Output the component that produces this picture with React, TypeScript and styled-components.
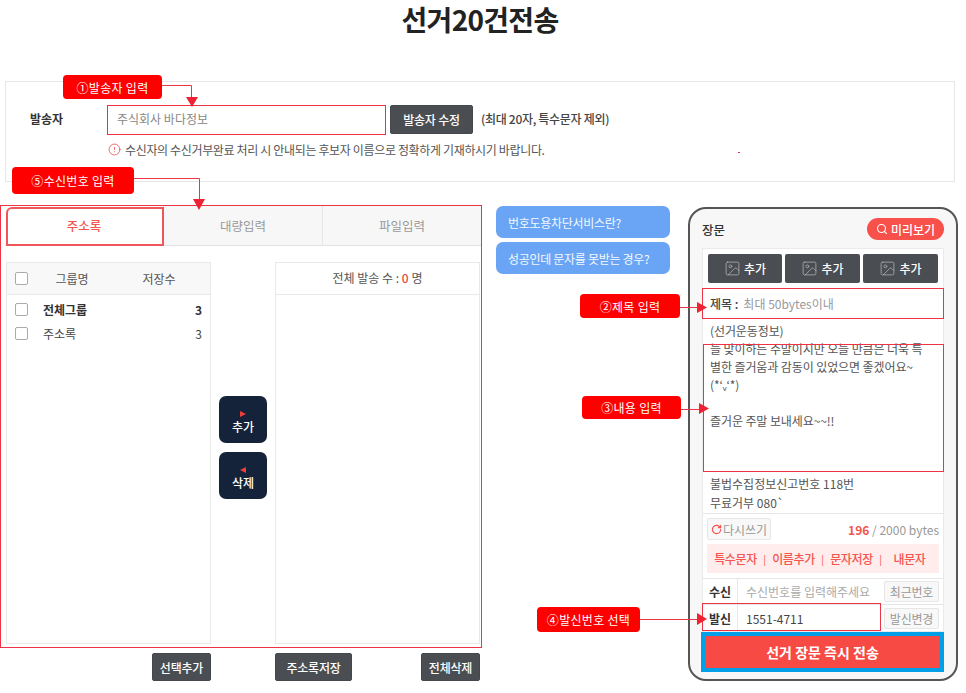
import * as React from "react";
import styled, { createGlobalStyle } from "styled-components";
import { CircleAlert, RotateCw, Image as ImageIcon, Search } from "lucide-react";

const GlobalStyle = createGlobalStyle`
  html, body {
    margin: 0;
    padding: 0;
    background: #fff;
    font-family: "Noto Sans CJK KR", "Noto Sans", sans-serif;
    font-size: 12px;
    color: #444;
  }
  * {
    box-sizing: border-box;
  }
`;

const Page = styled.div`
  position: relative;
  width: 966px;
  height: 693px;
  overflow: hidden;
`;

const Title = styled.h1`
  margin: 0;
  height: 81px;
  padding-right: 6px;
  text-align: center;
  font-size: 28px;
  line-height: 38px;
  font-weight: 700;
  letter-spacing: -0.7px;
  color: #222;
`;

const SenderCard = styled.section`
  margin-left: 5px;
  width: 950px;
  height: 101px;
  border: 1px solid #e6e6e6;
  padding: 23px 0 0 24px;
`;

const SenderRow = styled.div`
  display: flex;
  align-items: flex-start;
  height: 30px;
`;

const SenderLabel = styled.span`
  width: 77px;
  line-height: 28px;
  font-size: 12px;
  font-weight: 700;
  letter-spacing: -0.1px;
  color: #333;
`;

const SenderInput = styled.div`
  width: 279px;
  height: 30px;
  padding-left: 9px;
  border: 1px solid #ddd;
  line-height: 26px;
  font-size: 12px;
  color: #888;
`;

const DarkButton = styled.button<{ $w: number }>`
  width: ${(p) => p.$w}px;
  height: 28px;
  padding: 0;
  border: 1px solid #44484d;
  border-radius: 2px;
  background: #4a4e53;
  color: #fff;
  font-family: inherit;
  font-size: 12px;
  font-weight: 500;
  letter-spacing: -0.2px;
`;

const SenderButton = styled(DarkButton)`
  height: 29px;
`;

const SenderHint = styled.span`
  margin-left: 8px;
  line-height: 27px;
  font-size: 12px;
  font-weight: 500;
  letter-spacing: -0.3px;
  color: #444;
`;

const Notice = styled.div`
  display: flex;
  align-items: center;
  gap: 4px;
  margin: 4px 0 0 78px;
  height: 20px;
  font-size: 12px;
  letter-spacing: -0.35px;
  color: #555;
  svg {
    color: #ee5555;
  }
`;

const Workspace = styled.div`
  display: flex;
  align-items: flex-start;
  margin: 24px 0 0 5px;
`;

const LeftColumn = styled.div`
  width: 476px;
  flex: none;
`;

const Tabs = styled.div`
  display: grid;
  grid-template-columns: 158px 159px 159px;
  height: 40px;
  border-bottom: 1px solid #e3e3e3;
`;

const Tab = styled.div<{ $active?: boolean }>`
  display: flex;
  align-items: center;
  justify-content: center;
  font-size: 12.5px;
  font-weight: ${(p) => (p.$active ? 500 : 400)};
  color: ${(p) => (p.$active ? "#f4554f" : "#999")};
  background: ${(p) => (p.$active ? "#fff" : "#f7f7f7")};
  border-left: ${(p) => (p.$active ? "none" : "1px solid #e6e6e6")};
`;

const Lists = styled.div`
  display: grid;
  grid-template-columns: 205px 64px 205px;
  margin-top: 16px;
  padding-left: 1px;
  height: 382px;
`;

const ListBox = styled.div`
  border: 1px solid #e9e9e9;
`;

const ListHead = styled.div`
  display: flex;
  align-items: center;
  height: 32px;
  padding-left: 8px;
  border-bottom: 1px solid #e9e9e9;
  background: #f8f8f8;
  color: #555;
`;

const ReceiverHead = styled.div`
  height: 32px;
  line-height: 30px;
  border-bottom: 1px solid #e9e9e9;
  text-align: center;
  color: #555;
`;

const Zero = styled.b`
  color: #e8453f;
  font-weight: 500;
`;

const Check = styled.span`
  display: block;
  width: 13px;
  height: 13px;
  border: 1px solid #aaa;
  border-radius: 2px;
  background: #fff;
  flex: none;
`;

const HeadName = styled.span`
  width: 88px;
  text-align: center;
`;

const HeadCount = styled.span`
  width: 86px;
  text-align: center;
`;

const GroupList = styled.div`
  padding-top: 2px;
`;

const GroupRow = styled.div<{ $bold?: boolean }>`
  display: flex;
  align-items: center;
  height: 24px;
  padding: 0 8px 0 8px;
  font-weight: ${(p) => (p.$bold ? 700 : 400)};
  color: ${(p) => (p.$bold ? "#333" : "#444")};
`;

const GroupName = styled.span`
  margin-left: 15px;
  flex: 1;
`;

const Movers = styled.div`
  display: flex;
  flex-direction: column;
  align-items: center;
  gap: 9px;
  padding-top: 134px;
`;

const MoverButton = styled.button`
  display: flex;
  flex-direction: column;
  align-items: center;
  justify-content: center;
  width: 48px;
  height: 47px;
  padding: 5px 0 0;
  border: none;
  border-radius: 7px;
  background: #15233a;
  color: #fff;
  font-family: inherit;
  font-size: 12px;
  font-weight: 500;
  line-height: 15px;
`;

const Tri = styled.i<{ $left?: boolean }>`
  display: block;
  width: 0;
  height: 0;
  margin-bottom: 2px;
  border-top: 3.5px solid transparent;
  border-bottom: 3.5px solid transparent;
  ${(p) =>
    p.$left ? "border-right: 6px solid #ee3b3b;" : "border-left: 6px solid #ee3b3b;"}
`;

const ListActions = styled.div`
  display: flex;
  margin-top: 9px;
  padding-left: 147px;
`;

const Spacer = styled.span<{ $w: number }>`
  width: ${(p) => p.$w}px;
  flex: none;
`;

const HelpColumn = styled.div`
  display: flex;
  flex-direction: column;
  gap: 4px;
  width: 174px;
  margin-left: 15px;
  flex: none;
`;

const HelpButton = styled.button`
  height: 32px;
  padding: 0 0 0 12px;
  border: none;
  border-radius: 7px;
  background: #6aa5f5;
  color: #f4f8ff;
  font-family: inherit;
  font-size: 12px;
  letter-spacing: -0.3px;
  text-align: left;
`;

const Phone = styled.div`
  width: 270px;
  height: 474px;
  margin: 1px 0 0 18px;
  flex: none;
  padding: 9px 12px 0 12px;
  border: 2px solid #555;
  border-radius: 18px;
  background: #f7f7f7;
`;

const PhoneHead = styled.div`
  display: flex;
  align-items: center;
  justify-content: space-between;
  height: 22px;
  margin-bottom: 8px;
  font-size: 12.5px;
  font-weight: 500;
  color: #333;
`;

const PreviewButton = styled.button`
  display: flex;
  align-items: center;
  justify-content: center;
  gap: 3px;
  width: 77px;
  height: 22px;
  padding: 0;
  border: none;
  border-radius: 11px;
  background: #f8504a;
  color: #fff;
  font-family: inherit;
  font-size: 12px;
  font-weight: 500;
`;

const Sheet = styled.div`
  width: 242px;
  height: 384px;
  border: 1px solid #eaeaea;
  background: #fff;
`;

const ImageRow = styled.div`
  display: grid;
  grid-template-columns: 74px 75px 75px;
  gap: 3px;
  padding: 5px 5px 0;
`;

const ImageButton = styled.button`
  display: flex;
  align-items: center;
  justify-content: center;
  gap: 3px;
  height: 29px;
  padding: 0;
  border: none;
  border-radius: 2px;
  background: #4a4e53;
  color: #fff;
  font-family: inherit;
  font-size: 12px;
  font-weight: 500;
  svg {
    color: #aaa;
  }
`;

const SubjectRow = styled.div`
  display: flex;
  align-items: center;
  gap: 5px;
  height: 31px;
  margin-top: 5px;
  padding-left: 7px;
  color: #999;
`;

const SubjectLabel = styled.span`
  font-weight: 500;
  color: #444;
`;

const Message = styled.div`
  height: 155px;
  padding: 3px 7px 0;
  line-height: 18px;
  font-size: 12px;
  color: #555;
  white-space: pre-wrap;
  letter-spacing: -0.1px;
`;

const Footer = styled.div`
  padding: 0 7px;
  line-height: 19px;
  height: 40px;
  color: #555;
  border-bottom: 1px solid #e6e6e6;
  white-space: pre-wrap;
`;

const CountRow = styled.div`
  display: flex;
  align-items: center;
  justify-content: space-between;
  height: 30px;
  padding: 0 4px 0 4px;
`;

const ResetButton = styled.button`
  display: flex;
  align-items: center;
  justify-content: center;
  gap: 1px;
  width: 64px;
  height: 22px;
  padding: 0;
  border: 1px solid #e6e6e6;
  border-radius: 2px;
  background: #f8f8f8;
  color: #999;
  font-family: inherit;
  font-size: 12px;
  svg {
    color: #f4554f;
  }
`;

const Bytes = styled.span`
  color: #999;
`;

const ByteCount = styled.b`
  color: #f4554f;
  font-weight: 700;
`;

const ToolRow = styled.div`
  display: flex;
  align-items: center;
  height: 29px;
  margin: 0 4px 0 4px;
  padding-left: 7px;
  background: #ffecec;
  color: #f4554f;
  font-weight: 500;
  white-space: nowrap;
  letter-spacing: -0.4px;
`;

const ToolLink = styled.span<{ $w: number }>`
  width: ${(p) => p.$w}px;
  flex: none;
  text-align: center;
`;

const ToolSep = styled.span`
  width: 15px;
  flex: none;
  text-align: center;
  font-size: 10px;
  font-weight: 400;
`;

const FieldRow = styled.div<{ $h: number; $top?: boolean }>`
  display: flex;
  align-items: center;
  height: ${(p) => p.$h}px;
  margin-top: ${(p) => (p.$top ? "5px" : "0")};
  border-top: 1px solid #e6e6e6;
`;

const FieldLabel = styled.span`
  width: 35px;
  height: 100%;
  display: flex;
  align-items: center;
  justify-content: center;
  border-right: 1px solid #e6e6e6;
  font-weight: 700;
  color: #333;
`;

const FieldValue = styled.span<{ $muted?: boolean }>`
  flex: 1;
  padding-left: 8px;
  color: ${(p) => (p.$muted ? "#aaa" : "#444")};
`;

const FieldButton = styled.button`
  width: 55px;
  height: 21px;
  margin-right: 4px;
  padding: 0;
  border: 1px solid #e6e6e6;
  border-radius: 2px;
  background: #f8f8f8;
  color: #999;
  font-family: inherit;
  font-size: 12px;
  letter-spacing: -0.2px;
`;

const SendButton = styled.button`
  display: block;
  width: 243px;
  height: 40px;
  margin-left: -2px;
  padding: 0;
  border: 4px solid #00a0e9;
  background: #f84a45;
  color: #fff;
  font-family: inherit;
  font-size: 14px;
  font-weight: 700;
`;

const Callout = styled.div<{ $x: number; $y: number; $w: number; $h: number }>`
  position: absolute;
  left: ${(p) => p.$x}px;
  top: ${(p) => p.$y}px;
  width: ${(p) => p.$w}px;
  height: ${(p) => p.$h}px;
  display: flex;
  align-items: center;
  justify-content: center;
  border-radius: 4px;
  background: #fe0000;
  color: #fff;
  font-size: 12px;
  letter-spacing: 0.3px;
`;

const Outline = styled.div<{ $x: number; $y: number; $w: number; $h: number }>`
  position: absolute;
  left: ${(p) => p.$x}px;
  top: ${(p) => p.$y}px;
  width: ${(p) => p.$w}px;
  height: ${(p) => p.$h}px;
  border: 1px solid #ee3344;
  pointer-events: none;
`;

const ActiveTabOutline = styled(Outline)`
  border: 2px solid #f0555a;
  border-top-left-radius: 6px;
`;

const Arrows = styled.svg`
  position: absolute;
  left: 0;
  top: 0;
  pointer-events: none;
`;

const Dot = styled.span`
  position: absolute;
  left: 738px;
  top: 152px;
  width: 2px;
  height: 1px;
  background: #e0304a;
`;

export default function App() {
  return (
    <Page>
      <GlobalStyle />
      <Title>선거20건전송</Title>

      <SenderCard>
        <SenderRow>
          <SenderLabel>발송자</SenderLabel>
          <SenderInput>주식회사 바다정보</SenderInput>
          <Spacer $w={4} />
          <SenderButton $w={83}>발송자 수정</SenderButton>
          <SenderHint>(최대 20자, 특수문자 제외)</SenderHint>
        </SenderRow>
        <Notice>
          <CircleAlert size={13} strokeWidth={1.6} />
          수신자의 수신거부완료 처리 시 안내되는 후보자 이름으로 정확하게 기재하시기 바랍니다.
        </Notice>
      </SenderCard>

      <Workspace>
        <LeftColumn>
          <Tabs>
            <Tab $active>주소록</Tab>
            <Tab>대량입력</Tab>
            <Tab>파일입력</Tab>
          </Tabs>
          <Lists>
            <ListBox>
              <ListHead>
                <Check />
                <HeadName>그룹명</HeadName>
                <HeadCount>저장수</HeadCount>
              </ListHead>
              <GroupList>
                <GroupRow $bold>
                  <Check />
                  <GroupName>전체그룹</GroupName>3
                </GroupRow>
                <GroupRow>
                  <Check />
                  <GroupName>주소록</GroupName>3
                </GroupRow>
              </GroupList>
            </ListBox>
            <Movers>
              <MoverButton>
                <Tri />
                추가
              </MoverButton>
              <MoverButton>
                <Tri $left />
                삭제
              </MoverButton>
            </Movers>
            <ListBox>
              <ReceiverHead>
                전체 발송 수 : <Zero>0</Zero> 명
              </ReceiverHead>
            </ListBox>
          </Lists>
          <ListActions>
            <DarkButton $w={59}>선택추가</DarkButton>
            <Spacer $w={64} />
            <DarkButton $w={77}>주소록저장</DarkButton>
            <Spacer $w={69} />
            <DarkButton $w={59}>전체삭제</DarkButton>
          </ListActions>
        </LeftColumn>

        <HelpColumn>
          <HelpButton>번호도용차단서비스란?</HelpButton>
          <HelpButton>성공인데 문자를 못받는 경우?</HelpButton>
        </HelpColumn>

        <Phone>
          <PhoneHead>
            장문
            <PreviewButton>
              <Search size={12} strokeWidth={2.2} />
              미리보기
            </PreviewButton>
          </PhoneHead>
          <Sheet>
            <ImageRow>
              {[0, 1, 2].map((i) => (
                <ImageButton key={i}>
                  <ImageIcon size={17} strokeWidth={1.2} />
                  추가
                </ImageButton>
              ))}
            </ImageRow>
            <SubjectRow>
              <SubjectLabel>제목 :</SubjectLabel>
              최대 50bytes이내
            </SubjectRow>
            <Message>
              {"(선거운동정보)\n늘 맞이하는 주말이지만 오늘 만큼은 더욱 특\n별한 즐거움과 감동이 있었으면 좋겠어요~\n(*ʻᵥʻ*)\n\n즐거운 주말 보내세요~~!!"}
            </Message>
            <Footer>{"불법수집정보신고번호 118번\n무료거부 080`"}</Footer>
            <CountRow>
              <ResetButton>
                <RotateCw size={11} strokeWidth={2.6} />
                다시쓰기
              </ResetButton>
              <Bytes>
                <ByteCount>196</ByteCount> / 2000 bytes
              </Bytes>
            </CountRow>
            <ToolRow>
              <ToolLink $w={43}>특수문자</ToolLink>
              <ToolSep>|</ToolSep>
              <ToolLink $w={43}>이름추가</ToolLink>
              <ToolSep>|</ToolSep>
              <ToolLink $w={43}>문자저장</ToolLink>
              <ToolSep>|</ToolSep>
              <Spacer $w={1} />
              <ToolLink $w={41}>내문자</ToolLink>
            </ToolRow>
            <FieldRow $top $h={26}>
              <FieldLabel>수신</FieldLabel>
              <FieldValue $muted>수신번호를 입력해주세요</FieldValue>
              <FieldButton>최근번호</FieldButton>
            </FieldRow>
            <FieldRow $h={28}>
              <FieldLabel>발신</FieldLabel>
              <FieldValue>1551-4711</FieldValue>
              <FieldButton>발신변경</FieldButton>
            </FieldRow>
            <SendButton>선거 장문 즉시 전송</SendButton>
          </Sheet>
        </Phone>
      </Workspace>

      <Outline $x={107} $y={105} $w={279} $h={30} />
      <Outline $x={0} $y={205} $w={482} $h={443} />
      <ActiveTabOutline $x={6} $y={207} $w={158} $h={39} />
      <Outline $x={702} $y={288} $w={242} $h={31} />
      <Outline $x={703} $y={344} $w={241} $h={128} />
      <Outline $x={702} $y={603} $w={179} $h={28} />
      <Dot />

      <Arrows width={966} height={693} viewBox="0 0 966 693" fill="none">
        <path
          d="M162 85.500H191.500V98M134 178.500H199.500V200M680 307.500H698M681 409.500H700M640 619.500H698"
          stroke="#ee3344"
        />
        <g fill="#ee2233">
          <path d="M186 97H198L192 107Z" />
          <path d="M193 199H205L199 210Z" />
          <path d="M697 302L707 307.500L697 313Z" />
          <path d="M699 403L709 408.500L699 414Z" />
          <path d="M697 613L707 619L697 625Z" />
        </g>
      </Arrows>

      <Callout $x={63} $y={75} $w={99} $h={24}>①발송자 입력</Callout>
      <Callout $x={12} $y={167} $w={122} $h={27}>⑤수신번호 입력</Callout>
      <Callout $x={580} $y={294} $w={100} $h={24}>②제목 입력</Callout>
      <Callout $x={582} $y={396} $w={99} $h={23}>③내용 입력</Callout>
      <Callout $x={537} $y={607} $w={103} $h={25}>④발신번호 선택</Callout>
    </Page>
  );
}
